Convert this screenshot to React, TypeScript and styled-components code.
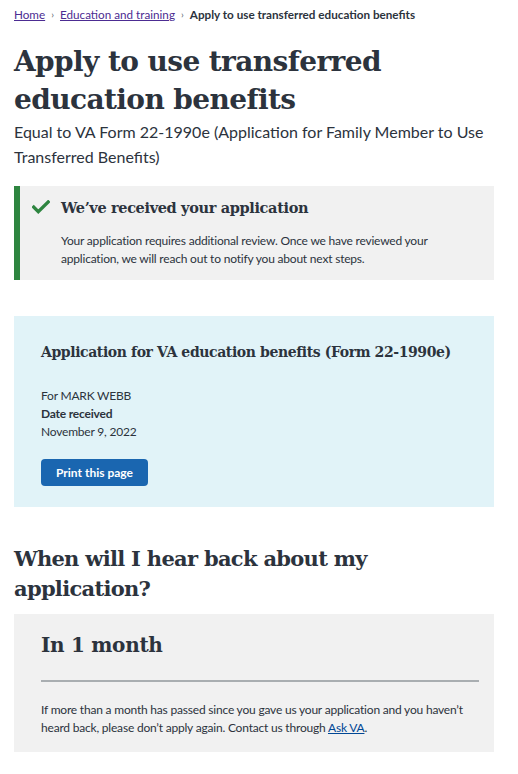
import React from "react";
import styled, { createGlobalStyle } from "styled-components";

const Global = createGlobalStyle`
  html, body { margin: 0; padding: 0; background: #fff; }
  body { font-family: "Lato", "Open Sans", sans-serif; color: #323a45; }
  * { box-sizing: border-box; }
`;

const serif = `"DejaVu Serif", "Liberation Serif", serif`;
const ink = "#2c333d";

const Page = styled.div`
  padding: 0 24px 0 14px;
  display: flex;
  flex-direction: column;
`;

const Crumbs = styled.nav`
  display: flex;
  align-items: center;
  gap: 6px;
  font-size: 11.7px;
  line-height: 16px;
  padding-top: 4px;
  height: 24px;
`;

const CrumbLink = styled.a`
  color: #4c2c92;
  text-decoration: underline;
`;

const Sep = styled.span`
  color: #5b616b;
  font-size: 10px;
`;

const Current = styled.span`
  font-weight: 700;
  color: ${ink};
`;

const H1 = styled.h1`
  font-family: ${serif};
  font-weight: 700;
  font-size: 28px;
  letter-spacing: -0.6px;
  line-height: 38px;
  color: ${ink};
  margin: 19px 0 0 0;
`;

const Sub = styled.p`
  font-size: 16px;
  line-height: 25px;
  margin: 0;
  color: ${ink};
`;

const Alert = styled.div`
  margin-top: 17px;
  background: #f1f1f1;
  border-left: 6px solid #2e8540;
  padding: 10px 20px 12px 12px;
  display: flex;
  gap: 11px;
`;

const AlertBody = styled.div`
  display: flex;
  flex-direction: column;
`;

const AlertTitle = styled.h3`
  font-family: ${serif};
  font-weight: 700;
  font-size: 14.5px;
  letter-spacing: -0.35px;
  line-height: 20px;
  margin: 2px 0 14px 0;
  color: ${ink};
`;

const Small = styled.p<{ $bold?: boolean }>`
  font-size: 12px;
  letter-spacing: -0.2px;
  line-height: 18px;
  margin: 0;
  font-weight: ${(p) => (p.$bold ? 700 : 400)};
  color: ${ink};
`;

const InfoBox = styled.div`
  margin-top: 36px;
  background: #e1f3f8;
  padding: 26px 27px 21px 27px;
  display: flex;
  flex-direction: column;
  align-items: flex-start;
`;

const BoxTitle = styled.h3`
  font-family: ${serif};
  font-weight: 700;
  font-size: 14px;
  letter-spacing: -0.4px;
  line-height: 20px;
  margin: 0 0 25px 0;
  color: ${ink};
  white-space: nowrap;
`;

const Button = styled.button`
  margin-top: 18px;
  background: #1a66b0;
  color: #fff;
  border: none;
  border-radius: 4px;
  height: 27px;
  padding: 0 15px;
  font-family: inherit;
  font-weight: 700;
  font-size: 12px;
`;

const H2 = styled.h2`
  font-family: ${serif};
  font-weight: 700;
  font-size: 21px;
  letter-spacing: -0.7px;
  line-height: 30px;
  margin: 37px 0 10px 0;
  color: ${ink};
`;

const GrayBox = styled.div`
  background: #f1f1f1;
  padding: 14px 15px 15px 27px;
  display: flex;
  flex-direction: column;
`;

const Month = styled.h3`
  font-family: ${serif};
  font-weight: 700;
  font-size: 20px;
  letter-spacing: -0.3px;
  line-height: 30px;
  margin: 2px 0 0 0;
  color: ${ink};
`;

const Rule = styled.hr`
  border: none;
  border-top: 2px solid #a9aeb1;
  margin: 20px 0 19px 0;
`;

const Link = styled.a`
  color: #004795;
  text-decoration: underline;
`;

const Check = () => (
  <svg width="18" height="14" viewBox="0 0 18 14" style={{ marginTop: 4, flexShrink: 0 }}>
    <path d="M1.8 7.2 L6.3 11.6 L16.2 2" fill="none" stroke="#2e8540" strokeWidth="3.4" strokeLinecap="square" strokeLinejoin="miter" />
  </svg>
);

export default function App() {
  return (
    <>
      <Global />
      <Page>
        <Crumbs>
          <CrumbLink href="#">Home</CrumbLink>
          <Sep>›</Sep>
          <CrumbLink href="#">Education and training</CrumbLink>
          <Sep>›</Sep>
          <Current>Apply to use transferred education benefits</Current>
        </Crumbs>
        <H1>
          Apply to use transferred
          <br />
          education benefits
        </H1>
        <Sub>
          Equal to VA Form 22-1990e (Application for Family Member to Use Transferred Benefits)
        </Sub>
        <Alert>
          <Check />
          <AlertBody>
            <AlertTitle>We’ve received your application</AlertTitle>
            <Small>
              Your application requires additional review. Once we have reviewed your application, we will reach out
              to notify you about next steps.
            </Small>
          </AlertBody>
        </Alert>
        <InfoBox>
          <BoxTitle>Application for VA education benefits (Form 22-1990e)</BoxTitle>
          <Small>For MARK WEBB</Small>
          <Small $bold>Date received</Small>
          <Small>November 9, 2022</Small>
          <Button>Print this page</Button>
        </InfoBox>
        <H2>When will I hear back about my application?</H2>
        <GrayBox>
          <Month>In 1 month</Month>
          <Rule />
          <Small>
            If more than a month has passed since you gave us your application and you haven’t heard back, please
            don’t apply again. Contact us through <Link href="#">Ask VA</Link>.
          </Small>
        </GrayBox>
      </Page>
    </>
  );
}
